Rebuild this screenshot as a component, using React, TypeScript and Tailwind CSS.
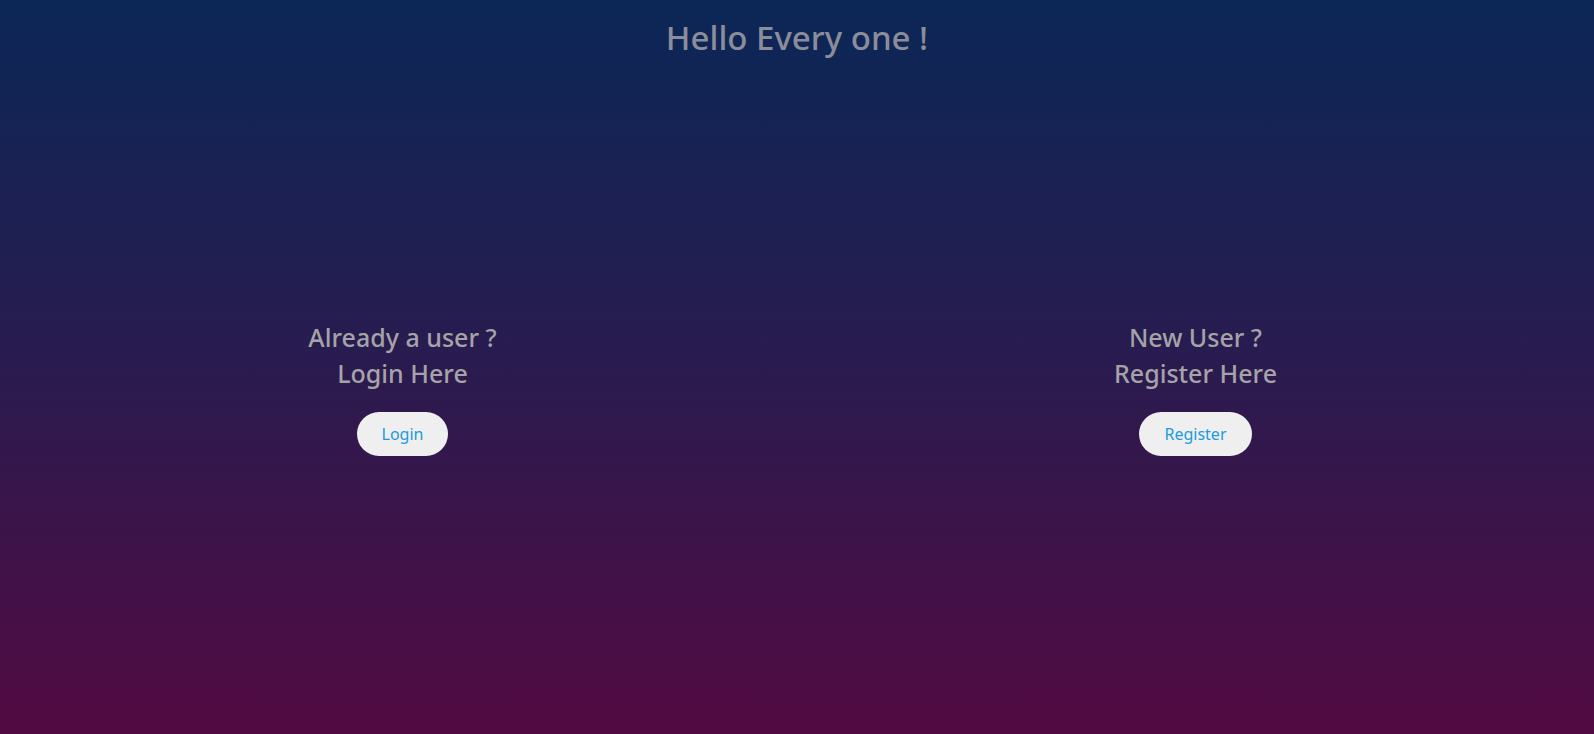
export default function App() {
  return (
    <div
      className="flex h-screen min-h-[734px] w-full flex-col bg-[linear-gradient(to_bottom,#0b2756,#2a1b4f_50%,#520a42)] text-center"
      style={{ fontFamily: '"Noto Sans", "Open Sans", sans-serif' }}
    >
      {/* Heading */}
      <h1 className="pt-[14px] text-[33px] font-medium leading-[48px] text-[#8b8d9b]">Hello Every one !</h1>

      {/* Two columns */}
      <div className="mt-[257px] grid grid-cols-2">
        <div className="flex flex-col items-center pl-[8px]">
          <p className="text-[25px] font-medium leading-[36px] text-[#a6a3a8]">
            Already a user ?<br />
            Login Here
          </p>
          <button className="mt-[21px] rounded-[22px] bg-[#efefef] px-[25px] py-[10px] text-[16px] leading-6 text-[#1c9ae2]">
            Login
          </button>
        </div>
        <div className="flex flex-col items-center">
          <p className="text-[25px] font-medium leading-[36px] text-[#a6a3a8]">
            New User ?<br />
            Register Here
          </p>
          <button className="mt-[21px] rounded-[22px] bg-[#efefef] px-[25px] py-[10px] text-[16px] leading-6 text-[#1c9ae2]">
            Register
          </button>
        </div>
      </div>
    </div>
  );
}
